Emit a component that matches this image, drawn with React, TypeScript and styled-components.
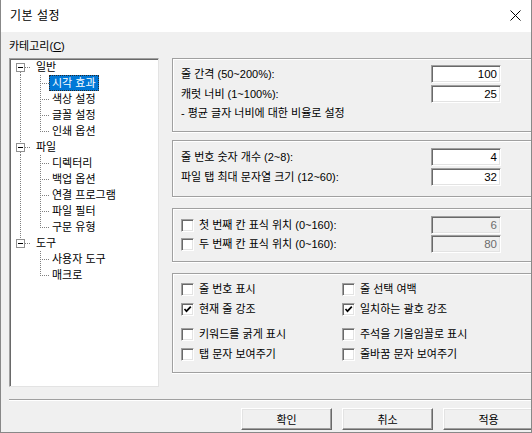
import React from "react"
import styled, { createGlobalStyle, css } from "styled-components"

type TreeNode = { label: string; children: string[] }

const tree: TreeNode[] = [
  { label: "일반", children: ["시각 효과", "색상 설정", "글꼴 설정", "인쇄 옵션"] },
  { label: "파일", children: ["디렉터리", "백업 옵션", "연결 프로그램", "파일 필터", "구문 유형"] },
  { label: "도구", children: ["사용자 도구", "매크로"] },
]

const selected = "시각 효과"

const options = [
  [
    { label: "줄 번호 표시", checked: false },
    { label: "줄 선택 여백", checked: false },
    { label: "현재 줄 강조", checked: true },
    { label: "일치하는 괄호 강조", checked: true },
  ],
  [
    { label: "키워드를 굵게 표시", checked: false },
    { label: "주석을 기울임꼴로 표시", checked: false },
    { label: "탭 문자 보여주기", checked: false },
    { label: "줄바꿈 문자 보여주기", checked: false },
  ],
]

const ParentGuide: React.FC<{ first: boolean; last: boolean }> = ({ first, last }) => (
  <S.Guide width={22} height={16}>
    {!first && <line x1={9.5} y1={0} x2={9.5} y2={4} />}
    {!last && <line x1={9.5} y1={13} x2={9.5} y2={16} />}
    <line x1={14} y1={8.5} x2={20} y2={8.5} />
    <rect x={5.5} y={4.5} width={8} height={8} fill="#fff" stroke="#919191" strokeDasharray="none" />
    <line x1={7} y1={8.5} x2={12} y2={8.5} stroke="#000" strokeDasharray="none" />
  </S.Guide>
)

const ChildGuide: React.FC<{ parentLast: boolean; last: boolean }> = ({ parentLast, last }) => (
  <S.Guide width={38} height={16}>
    {!parentLast && <line x1={9.5} y1={0} x2={9.5} y2={16} />}
    <line x1={29.5} y1={0} x2={29.5} y2={last ? 9 : 16} />
    <line x1={31} y1={8.5} x2={38} y2={8.5} />
  </S.Guide>
)

const Check: React.FC<{ checked: boolean }> = ({ checked }) => (
  <S.CheckBox>
    {checked && (
      <svg width="9" height="9" viewBox="0 0 9 9">
        <path d="M1.5 4 L3.5 6.2 L7.8 1.6" fill="none" stroke="#000" strokeWidth="1.7" />
      </svg>
    )}
  </S.CheckBox>
)

export default function App() {
  return (
    <>
      <GlobalStyle />
      <S.Window>
        <S.TitleBar>
          <S.Title>기본 설정</S.Title>
          <svg width="11" height="11" viewBox="0 0 11 11">
            <path d="M0.5 0.5 L10.5 10.5 M10.5 0.5 L0.5 10.5" stroke="#000" strokeWidth="1" />
          </svg>
        </S.TitleBar>
        <S.Body>
          <S.CategoryLabel>
            카테고리(<u>C</u>)
          </S.CategoryLabel>
          <S.Main>
            <S.Tree>
              {tree.map((node, ni) => {
                const lastRoot = ni === tree.length - 1
                return (
                  <React.Fragment key={node.label}>
                    <S.TreeRow>
                      <ParentGuide first={ni === 0} last={lastRoot} />
                      <S.TreeLabel>{node.label}</S.TreeLabel>
                    </S.TreeRow>
                    {node.children.map((child, ci) => (
                      <S.TreeRow key={child}>
                        <ChildGuide parentLast={lastRoot} last={ci === node.children.length - 1} />
                        <S.TreeLabel $selected={child === selected}>{child}</S.TreeLabel>
                      </S.TreeRow>
                    ))}
                  </React.Fragment>
                )
              })}
            </S.Tree>
            <S.Panel>
              <S.Group $height={74} $padTop={6}>
                <S.FieldRow>
                  <span>줄 간격 (50~200%):</span>
                  <S.NumberBox>100</S.NumberBox>
                </S.FieldRow>
                <S.FieldRow>
                  <span>캐럿 너비 (1~100%):</span>
                  <S.NumberBox>25</S.NumberBox>
                </S.FieldRow>
                <S.Hint>- 평균 글자 너비에 대한 비율로 설정</S.Hint>
              </S.Group>
              <S.Group $height={57} $padTop={7} $spaceAbove={8}>
                <S.FieldRow>
                  <span>줄 번호 숫자 개수 (2~8):</span>
                  <S.NumberBox>4</S.NumberBox>
                </S.FieldRow>
                <S.FieldRow>
                  <span>파일 탭 최대 문자열 크기 (12~60):</span>
                  <S.NumberBox>32</S.NumberBox>
                </S.FieldRow>
              </S.Group>
              <S.Group $height={54} $padTop={7} $spaceAbove={11} $rowGap={1}>
                <S.FieldRow>
                  <S.CheckLabel>
                    <Check checked={false} />
                    첫 번째 칸 표식 위치 (0~160):
                  </S.CheckLabel>
                  <S.NumberBox $disabled>6</S.NumberBox>
                </S.FieldRow>
                <S.FieldRow>
                  <S.CheckLabel>
                    <Check checked={false} />
                    두 번째 칸 표식 위치 (0~160):
                  </S.CheckLabel>
                  <S.NumberBox $disabled>80</S.NumberBox>
                </S.FieldRow>
              </S.Group>
              <S.Group $height={100} $padTop={5} $spaceAbove={11} $rowGap={5}>
                {options.map((block, bi) => (
                  <S.OptionGrid key={bi}>
                    {block.map((o) => (
                      <S.CheckLabel key={o.label}>
                        <Check checked={o.checked} />
                        {o.label}
                      </S.CheckLabel>
                    ))}
                  </S.OptionGrid>
                ))}
              </S.Group>
            </S.Panel>
          </S.Main>
          <S.Separator />
          <S.ButtonRow>
            <S.Button>확인</S.Button>
            <S.Button>취소</S.Button>
            <S.Button>적용</S.Button>
          </S.ButtonRow>
        </S.Body>
      </S.Window>
    </>
  )
}

const GlobalStyle = createGlobalStyle`
  html, body {
    margin: 0;
    padding: 0;
    background: #ffffff;
  }
  body {
    font-family: "Liberation Sans", "Noto Sans CJK KR", sans-serif;
    font-size: 11px;
    color: #000;
  }
`

const sunken = css`
  border-style: solid;
  border-width: 1px;
  border-color: #a0a0a0 #ffffff #ffffff #a0a0a0;
  box-shadow: inset 1px 1px 0 #696969, inset -1px -1px 0 #e3e3e3;
`

const S = {
  Window: styled.div`
    width: 532px;
    height: 433px;
    box-sizing: border-box;
    border: 1px solid #888888;
    border-top: none;
    display: flex;
    flex-direction: column;
    overflow: hidden;
    background: #f0f0f0;
  `,
  TitleBar: styled.div`
    height: 31px;
    flex: none;
    display: flex;
    align-items: center;
    justify-content: space-between;
    padding: 0 10px 1px 9px;
    background: #ffffff;
  `,
  Title: styled.span`
    font-size: 12px;
    line-height: 16px;
    letter-spacing: 0.5px;
  `,
  Body: styled.div`
    flex: 1;
    display: flex;
    flex-direction: column;
    padding: 7px 0 0 8px;
    min-height: 0;
  `,
  CategoryLabel: styled.div`
    height: 14px;
    line-height: 14px;
    margin-bottom: 5px;
    u {
      text-decoration-thickness: 1px;
      text-underline-offset: 1px;
    }
  `,
  Main: styled.div`
    display: flex;
    align-items: flex-start;
    height: 329px;
    flex: none;
  `,
  Tree: styled.div`
    ${sunken};
    box-sizing: border-box;
    width: 150px;
    height: 329px;
    flex: none;
    background: #ffffff;
    padding: 0 1px;
    border-color: #a0a0a0 #e3e3e3 #e3e3e3 #a0a0a0;
    box-shadow: inset 1px 1px 0 #696969;
  `,
  TreeRow: styled.div`
    display: flex;
    align-items: center;
    height: 16px;
  `,
  Guide: styled.svg`
    flex: none;
    display: block;
    shape-rendering: crispEdges;
    stroke: #808080;
    stroke-width: 1;
    stroke-dasharray: 1 1;
  `,
  TreeLabel: styled.span<{ $selected?: boolean }>`
    height: 16px;
    line-height: 14px;
    box-sizing: border-box;
    padding: 0 2px;
    white-space: nowrap;
    border: 1px ${(p) => (p.$selected ? "dotted #2a2a2a" : "solid transparent")};
    background: ${(p) => (p.$selected ? "#0078d7" : "transparent")};
    color: ${(p) => (p.$selected ? "#ffffff" : "#000000")};
  `,
  Panel: styled.div`
    flex: 1;
    display: flex;
    flex-direction: column;
    margin-left: 13px;
  `,
  Group: styled.div<{ $height: number; $padTop: number; $spaceAbove?: number; $rowGap?: number }>`
    box-sizing: border-box;
    height: ${(p) => p.$height}px;
    margin-top: ${(p) => p.$spaceAbove ?? 0}px;
    padding: ${(p) => p.$padTop}px 30px 0 8px;
    border: 1px solid #a0a0a0;
    border-right: none;
    box-shadow: inset 1px 1px 0 #ffffff, 0 1px 0 #ffffff;
    display: flex;
    flex-direction: column;
    gap: ${(p) => p.$rowGap ?? 2}px;
  `,
  FieldRow: styled.div`
    display: flex;
    align-items: center;
    justify-content: space-between;
    height: 18px;
    line-height: 14px;
    white-space: nowrap;
  `,
  NumberBox: styled.div<{ $disabled?: boolean }>`
    ${sunken};
    box-sizing: border-box;
    width: 70px;
    height: 18px;
    padding: 0 3px 0 0;
    text-align: right;
    line-height: 16px;
    font-size: 11.5px;
    background: ${(p) => (p.$disabled ? "#f0f0f0" : "#ffffff")};
    color: ${(p) => (p.$disabled ? "#6d6d6d" : "#000000")};
  `,
  Hint: styled.div`
    margin-top: 1px;
    height: 14px;
    line-height: 14px;
  `,
  OptionGrid: styled.div`
    display: grid;
    grid-template-columns: 161px 1fr;
    grid-auto-rows: 20px;
  `,
  CheckLabel: styled.label`
    display: flex;
    align-items: center;
    gap: 5px;
    line-height: 14px;
    white-space: nowrap;
  `,
  CheckBox: styled.span`
    ${sunken};
    box-sizing: border-box;
    width: 13px;
    height: 13px;
    flex: none;
    background: #ffffff;
    display: flex;
    align-items: center;
    justify-content: center;
  `,
  Separator: styled.div`
    margin-top: 12px;
    height: 1px;
    background: #a0a0a0;
    border-bottom: 1px solid #ffffff;
  `,
  ButtonRow: styled.div`
    display: flex;
    gap: 10px;
    margin-top: 7px;
    padding-left: 232px;
  `,
  Button: styled.button`
    box-sizing: border-box;
    width: 91px;
    height: 22px;
    flex: none;
    padding: 0;
    font-family: inherit;
    font-size: 11px;
    color: #000;
    background: #f0f0f0;
    border: 1px solid;
    border-color: #ffffff #696969 #696969 #ffffff;
    box-shadow: inset -1px -1px 0 #a0a0a0, inset 1px 1px 0 #e3e3e3;
  `,
}
